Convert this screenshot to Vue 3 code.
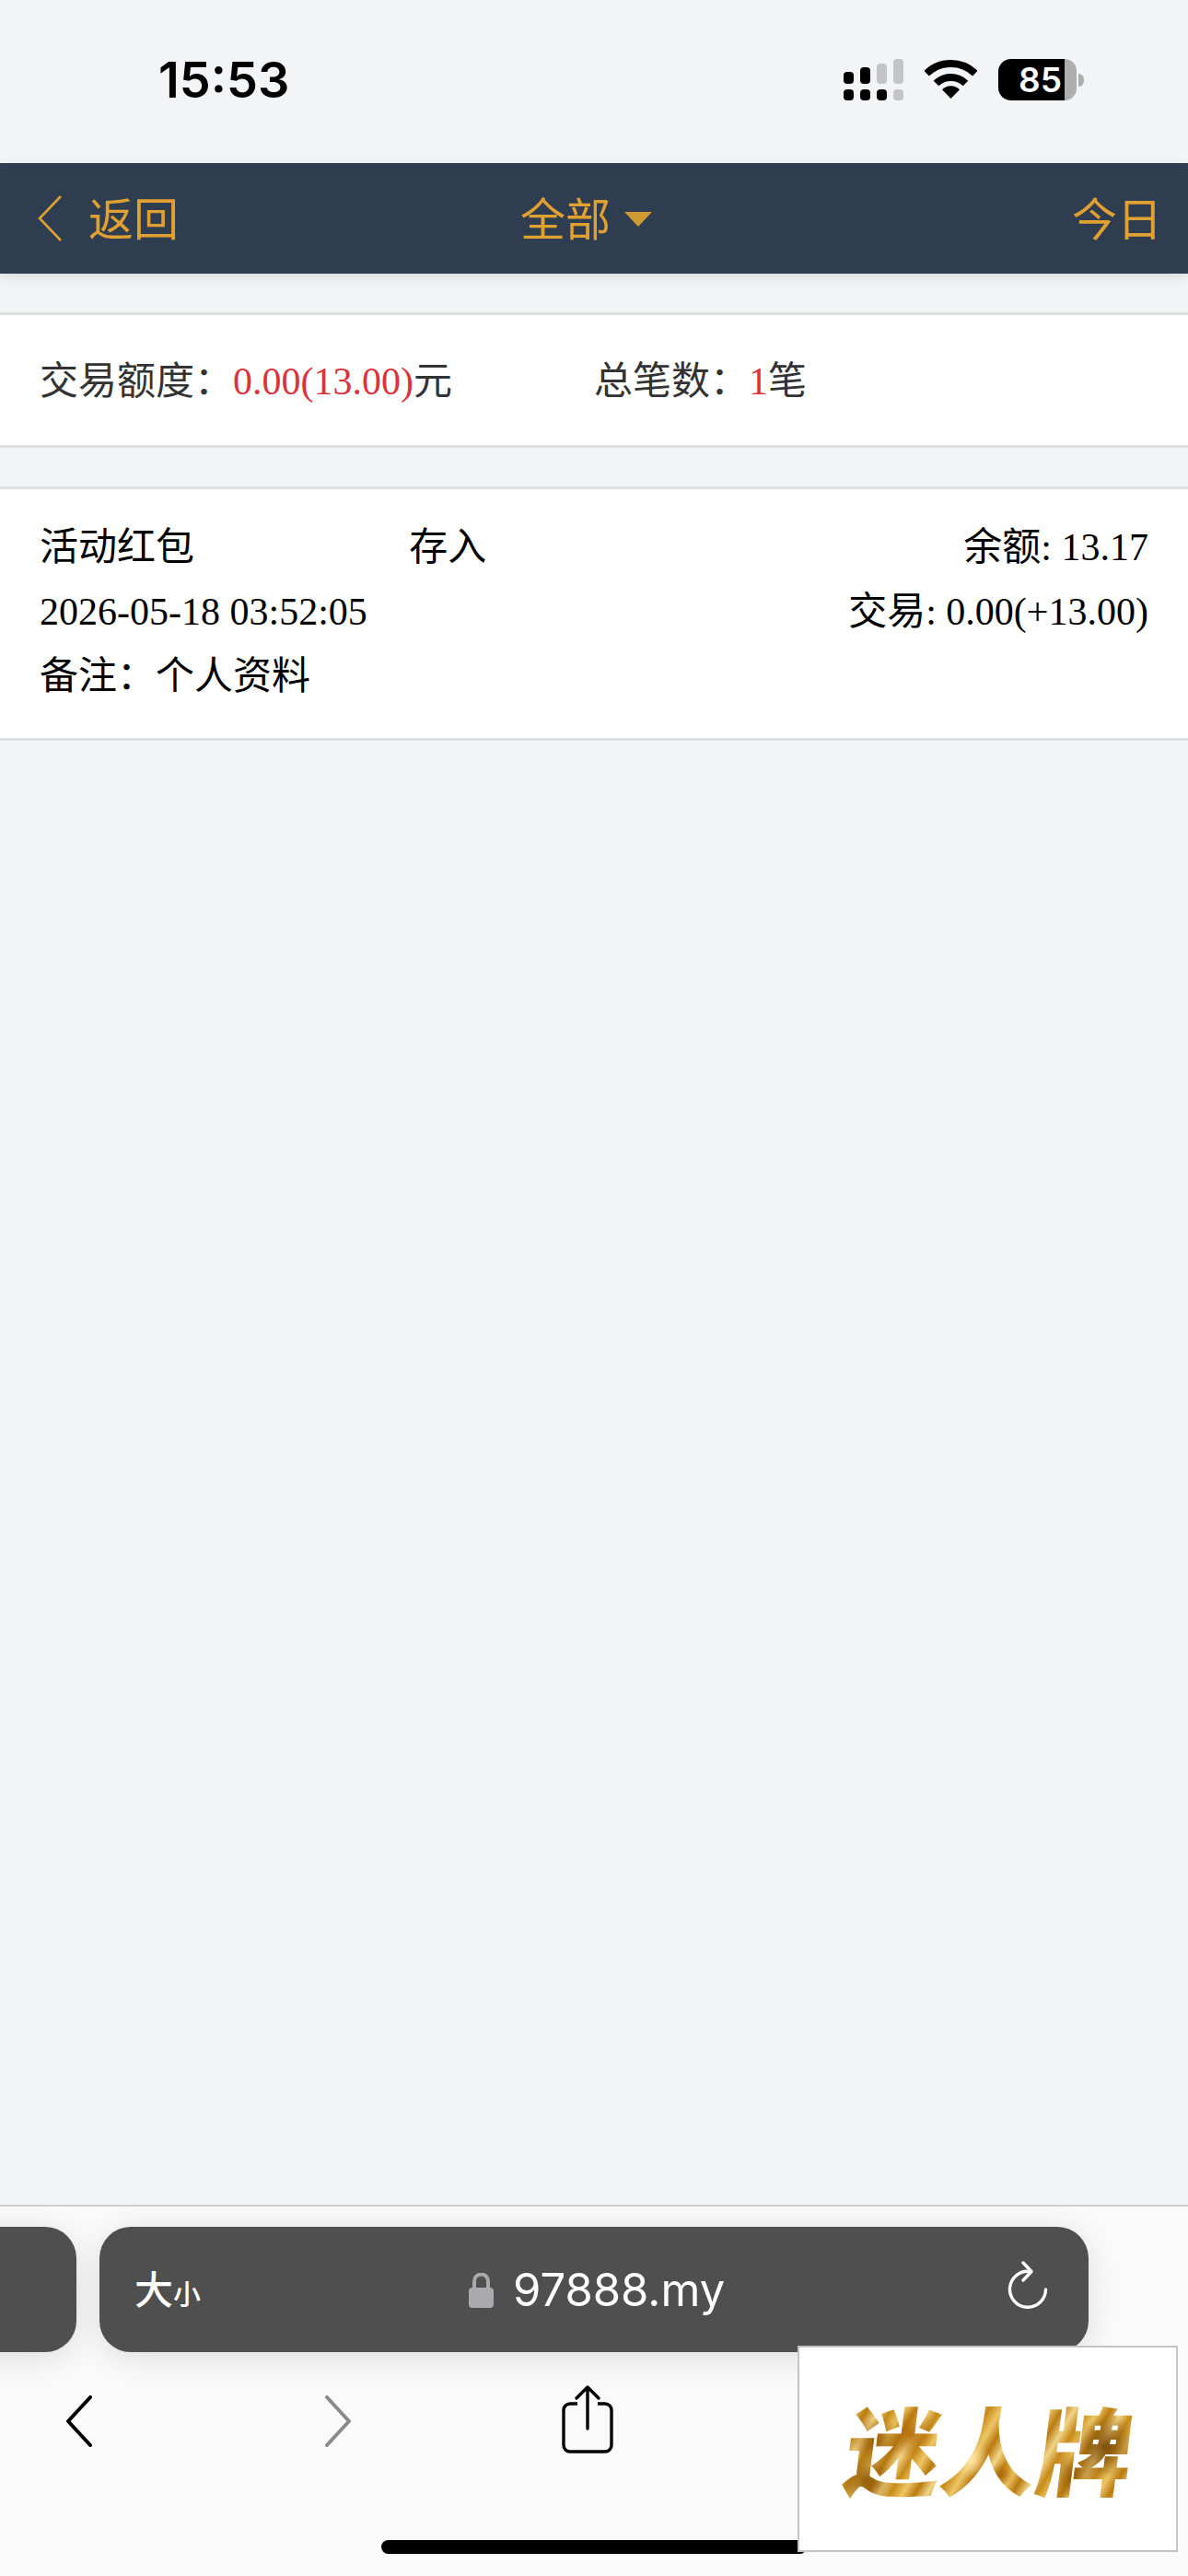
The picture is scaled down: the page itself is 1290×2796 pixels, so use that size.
<template>
  <div class="phone">
    <div class="status-bar">
      <span class="clock">15:53</span>
      <div class="status-icons">
        <svg class="signal" width="65" height="45" viewBox="0 0 65 45">
          <rect x="0" y="14" width="11" height="13" rx="4" fill="#000" />
          <rect x="18" y="9" width="11" height="18" rx="4" fill="#000" />
          <rect x="36" y="5" width="11" height="22" rx="4" fill="#c2c4c6" />
          <rect x="54" y="0" width="11" height="27" rx="4" fill="#c2c4c6" />
          <rect x="0" y="33" width="11" height="12" rx="4" fill="#000" />
          <rect x="18" y="33" width="11" height="12" rx="4" fill="#000" />
          <rect x="36" y="33" width="11" height="12" rx="4" fill="#000" />
          <rect x="54" y="33" width="11" height="12" rx="4" fill="#c2c4c6" />
        </svg>
        <svg class="wifi" width="57" height="42" viewBox="0 0 57 42">
          <path d="M2.1 14.7A38 38 0 0 1 54.9 14.7" fill="none" stroke="#000" stroke-width="8" />
          <path d="M12.5 25.5A23 23 0 0 1 44.5 25.5" fill="none" stroke="#000" stroke-width="8" />
          <path d="M28.5 42L19 32.2A13.5 13.5 0 0 1 38 32.2Z" fill="#000" />
        </svg>
        <div class="battery">
          <div class="battery-level"><span>85</span></div>
          <div class="battery-rest"></div>
          <div class="battery-nub"></div>
        </div>
      </div>
    </div>

    <header class="nav">
      <div class="nav-back">
        <svg width="27" height="50" viewBox="0 0 27 50">
          <path d="M25 1L2 25L25 49" fill="none" stroke="#e0a032" stroke-width="2.6" />
        </svg>
        <span class="nav-label">返回</span>
      </div>
      <div class="nav-title">
        <span class="nav-label">全部</span>
        <i class="caret"></i>
      </div>
      <div class="nav-label">今日</div>
    </header>

    <section class="card summary">
      <div>交易额度：<em>0.00(13.00)</em>元</div>
      <div>总笔数：<em>1</em>笔</div>
    </section>

    <section class="card record">
      <div class="row thirds">
        <span>活动红包</span>
        <span>存入</span>
        <span class="right">余额: 13.17</span>
      </div>
      <div class="row between">
        <span>2026-05-18 03:52:05</span>
        <span>交易: 0.00(+13.00)</span>
      </div>
      <div class="row">
        <span>备注：个人资料</span>
      </div>
    </section>

    <div class="spacer"></div>

    <footer class="browser">
      <div class="tabs">
        <div class="tab-prev"></div>
        <div class="address">
          <span class="reader">大<small>小</small></span>
          <div class="url">
            <svg width="27" height="38" viewBox="0 0 27 38">
              <path d="M6 17V9a7.5 7.5 0 0 1 15 0v8" fill="none" stroke="#a9a9ae" stroke-width="4" />
              <rect x="0" y="16" width="27" height="22" rx="4" fill="#a9a9ae" />
            </svg>
            <span>97888.my</span>
          </div>
          <svg class="reload" width="44" height="54" viewBox="0 0 44 54">
            <path d="M25 11.5A19.5 19.5 0 1 0 41.5 31" fill="none" stroke="#fff" stroke-width="3.4" stroke-linecap="round" />
            <path d="M17 2L26 11.5L17 21" fill="none" stroke="#fff" stroke-width="3.4" stroke-linecap="round" stroke-linejoin="round" />
          </svg>
        </div>
      </div>
      <div class="tools">
        <svg width="30" height="56" viewBox="0 0 30 56">
          <path d="M27 2L3 28L27 54" fill="none" stroke="#000" stroke-width="4" stroke-linecap="round" stroke-linejoin="round" />
        </svg>
        <svg class="tool-forward" width="30" height="56" viewBox="0 0 30 56">
          <path d="M3 2L27 28L3 54" fill="none" stroke="#8a8a8a" stroke-width="4" stroke-linecap="round" stroke-linejoin="round" />
        </svg>
        <svg class="tool-share" width="56" height="74" viewBox="0 0 56 74">
          <path d="M17 20H9a7 7 0 0 0-7 7v38a7 7 0 0 0 7 7h38a7 7 0 0 0 7-7V27a7 7 0 0 0-7-7h-8" fill="none" stroke="#000" stroke-width="3.4" />
          <path d="M28 47V2M16 14L28 2L40 14" fill="none" stroke="#000" stroke-width="3.4" stroke-linecap="round" stroke-linejoin="round" />
        </svg>
      </div>
      <div class="home-bar"></div>
    </footer>

    <div class="float-logo">
      <span class="logo-text">迷人牌</span>
    </div>
  </div>
</template>

<script setup>
</script>

<style>
html, body {
  margin: 0;
  background: #f3f4f6;
}
</style>

<style scoped>
.phone {
  position: relative;
  width: 1290px;
  height: 2796px;
  display: flex;
  flex-direction: column;
  overflow: hidden;
  background: #f3f4f6;
  font-family: "Liberation Serif", "Noto Sans CJK SC", serif;
  font-size: 42px;
  color: #000;
}

.status-bar {
  height: 177px;
  flex: none;
  display: flex;
  justify-content: space-between;
  padding: 64px 113px 0 172px;
  box-sizing: border-box;
}
.clock {
  font-family: Inter, "Liberation Sans", sans-serif;
  font-weight: 600;
  font-size: 54px;
  line-height: 46px;
  letter-spacing: 0;
}
.status-icons {
  display: flex;
  align-items: flex-start;
  height: 45px;
}
.wifi {
  margin: 1px 23px 0;
}
.battery {
  display: flex;
  align-items: center;
  height: 45px;
}
.battery-level {
  width: 72px;
  height: 45px;
  background: #000;
  border-radius: 14px 0 0 14px;
  color: #fff;
  font-family: Inter, "Liberation Sans", sans-serif;
  font-weight: 600;
  font-size: 37px;
  line-height: 45px;
  text-align: right;
  padding-right: 3px;
  box-sizing: border-box;
}
.battery-rest {
  width: 13px;
  height: 45px;
  background: #adafae;
  border-radius: 0 13px 13px 0;
}
.battery-nub {
  width: 6px;
  height: 14px;
  margin-left: 2px;
  background: #adafae;
  border-radius: 0 7px 7px 0;
}

.nav {
  height: 120px;
  flex: none;
  position: relative;
  display: flex;
  align-items: center;
  justify-content: space-between;
  padding: 0 28px 0 41px;
  background: #2e3e50;
  color: #e0a032;
  font-family: "Noto Sans CJK SC", sans-serif;
  font-size: 49px;
  font-weight: 400;
  box-shadow: 0 4px 12px rgba(0, 0, 0, 0.1);
}
.nav-label {
  padding-bottom: 6px;
}
.nav-back {
  display: flex;
  align-items: center;
  gap: 28px;
}
.nav-title {
  position: absolute;
  left: 565px;
  top: 0;
  height: 120px;
  display: flex;
  align-items: center;
  gap: 15px;
}
.caret {
  width: 0;
  height: 0;
  margin-top: 2px;
  border-left: 15px solid transparent;
  border-right: 15px solid transparent;
  border-top: 16px solid #d09a33;
}

.card {
  background: #fff;
  border-top: 3px solid #dedfe1;
  border-bottom: 3px solid #dedfe1;
  padding: 0 43px;
}
.summary {
  margin-top: 42px;
  height: 135px;
  padding-bottom: 6px;
  display: grid;
  grid-template-columns: 1fr 1fr;
  align-items: center;
  color: #333;
}
.summary em {
  font-style: normal;
  color: #d9343c;
}
.record {
  margin-top: 42px;
  padding-top: 28px;
  padding-bottom: 32px;
}
.row {
  line-height: 70px;
  height: 70px;
}
.thirds {
  display: grid;
  grid-template-columns: 1fr 1fr 1fr;
}
.right {
  text-align: right;
}
.between {
  display: flex;
  justify-content: space-between;
}

.spacer {
  flex: 1;
}

.browser {
  flex: none;
  height: 403px;
  position: relative;
  background: #fafafa;
  border-top: 2px solid #cdcdcd;
  box-sizing: border-box;
}
.tabs {
  display: flex;
  gap: 25px;
  margin: 22px 0 0 -60px;
}
.tab-prev {
  width: 143px;
  height: 136px;
  background: #4f4f4f;
  border-radius: 34px;
  box-shadow: 0 6px 34px rgba(0, 0, 0, 0.12);
}
.address {
  width: 1074px;
  height: 136px;
  background: #4f4f4f;
  border-radius: 34px;
  box-shadow: 0 6px 34px rgba(0, 0, 0, 0.12);
  position: relative;
  display: flex;
  align-items: center;
  justify-content: space-between;
  padding: 0 44px 0 38px;
  box-sizing: border-box;
  color: #fff;
}
.reader {
  font-family: "Noto Sans CJK SC", sans-serif;
  font-size: 42px;
  font-weight: 500;
  line-height: 60px;
}
.reader small {
  font-size: 30px;
  font-weight: 500;
}
.url {
  position: absolute;
  left: 401px;
  top: 49px;
  display: flex;
  align-items: center;
  gap: 21px;
  font-family: Inter, "Liberation Sans", sans-serif;
  font-size: 49px;
  line-height: 40px;
}
.reload {
  margin-top: -8px;
}
.tools {
  display: flex;
  align-items: flex-start;
  padding-left: 71px;
  margin-top: 47px;
}
.tool-forward {
  margin-left: 251px;
}
.tool-share {
  margin: -11px 0 0 228px;
}
.home-bar {
  position: absolute;
  left: 414px;
  top: 362px;
  width: 462px;
  height: 15px;
  background: #000;
  border-radius: 8px;
}

.float-logo {
  position: absolute;
  left: 866px;
  top: 2546px;
  width: 413px;
  height: 224px;
  background: #fff;
  border: 2px solid #c4c4c4;
  box-sizing: border-box;
  display: flex;
  align-items: center;
  justify-content: center;
}
.logo-text {
  font-family: "Noto Sans CJK SC", sans-serif;
  font-size: 104px;
  font-weight: 900;
  line-height: 120px;
  white-space: nowrap;
  margin: -4px 0 0 6px;
  transform: skewX(-7deg);
  color: transparent;
  background:
    radial-gradient(circle at 10% 45%, rgba(150, 90, 5, 0.95), transparent 9%),
    radial-gradient(circle at 22% 38%, rgba(176, 104, 4, 0.9), transparent 10%),
    radial-gradient(circle at 44% 62%, rgba(255, 232, 170, 0.95), transparent 10%),
    radial-gradient(circle at 55% 75%, rgba(170, 100, 5, 0.9), transparent 7%),
    radial-gradient(circle at 62% 40%, rgba(170, 100, 5, 0.8), transparent 7%),
    radial-gradient(circle at 90% 50%, rgba(120, 72, 5, 0.95), transparent 12%),
    radial-gradient(circle at 80% 75%, rgba(150, 90, 5, 0.9), transparent 10%),
    radial-gradient(circle at 8% 80%, rgba(140, 85, 5, 0.9), transparent 10%),
    repeating-linear-gradient(115deg, #c98d1c 0, #eec766 12px, #b97a10 24px, #f2d588 36px, #c48715 48px);
  -webkit-background-clip: text;
  background-clip: text;
}
</style>
